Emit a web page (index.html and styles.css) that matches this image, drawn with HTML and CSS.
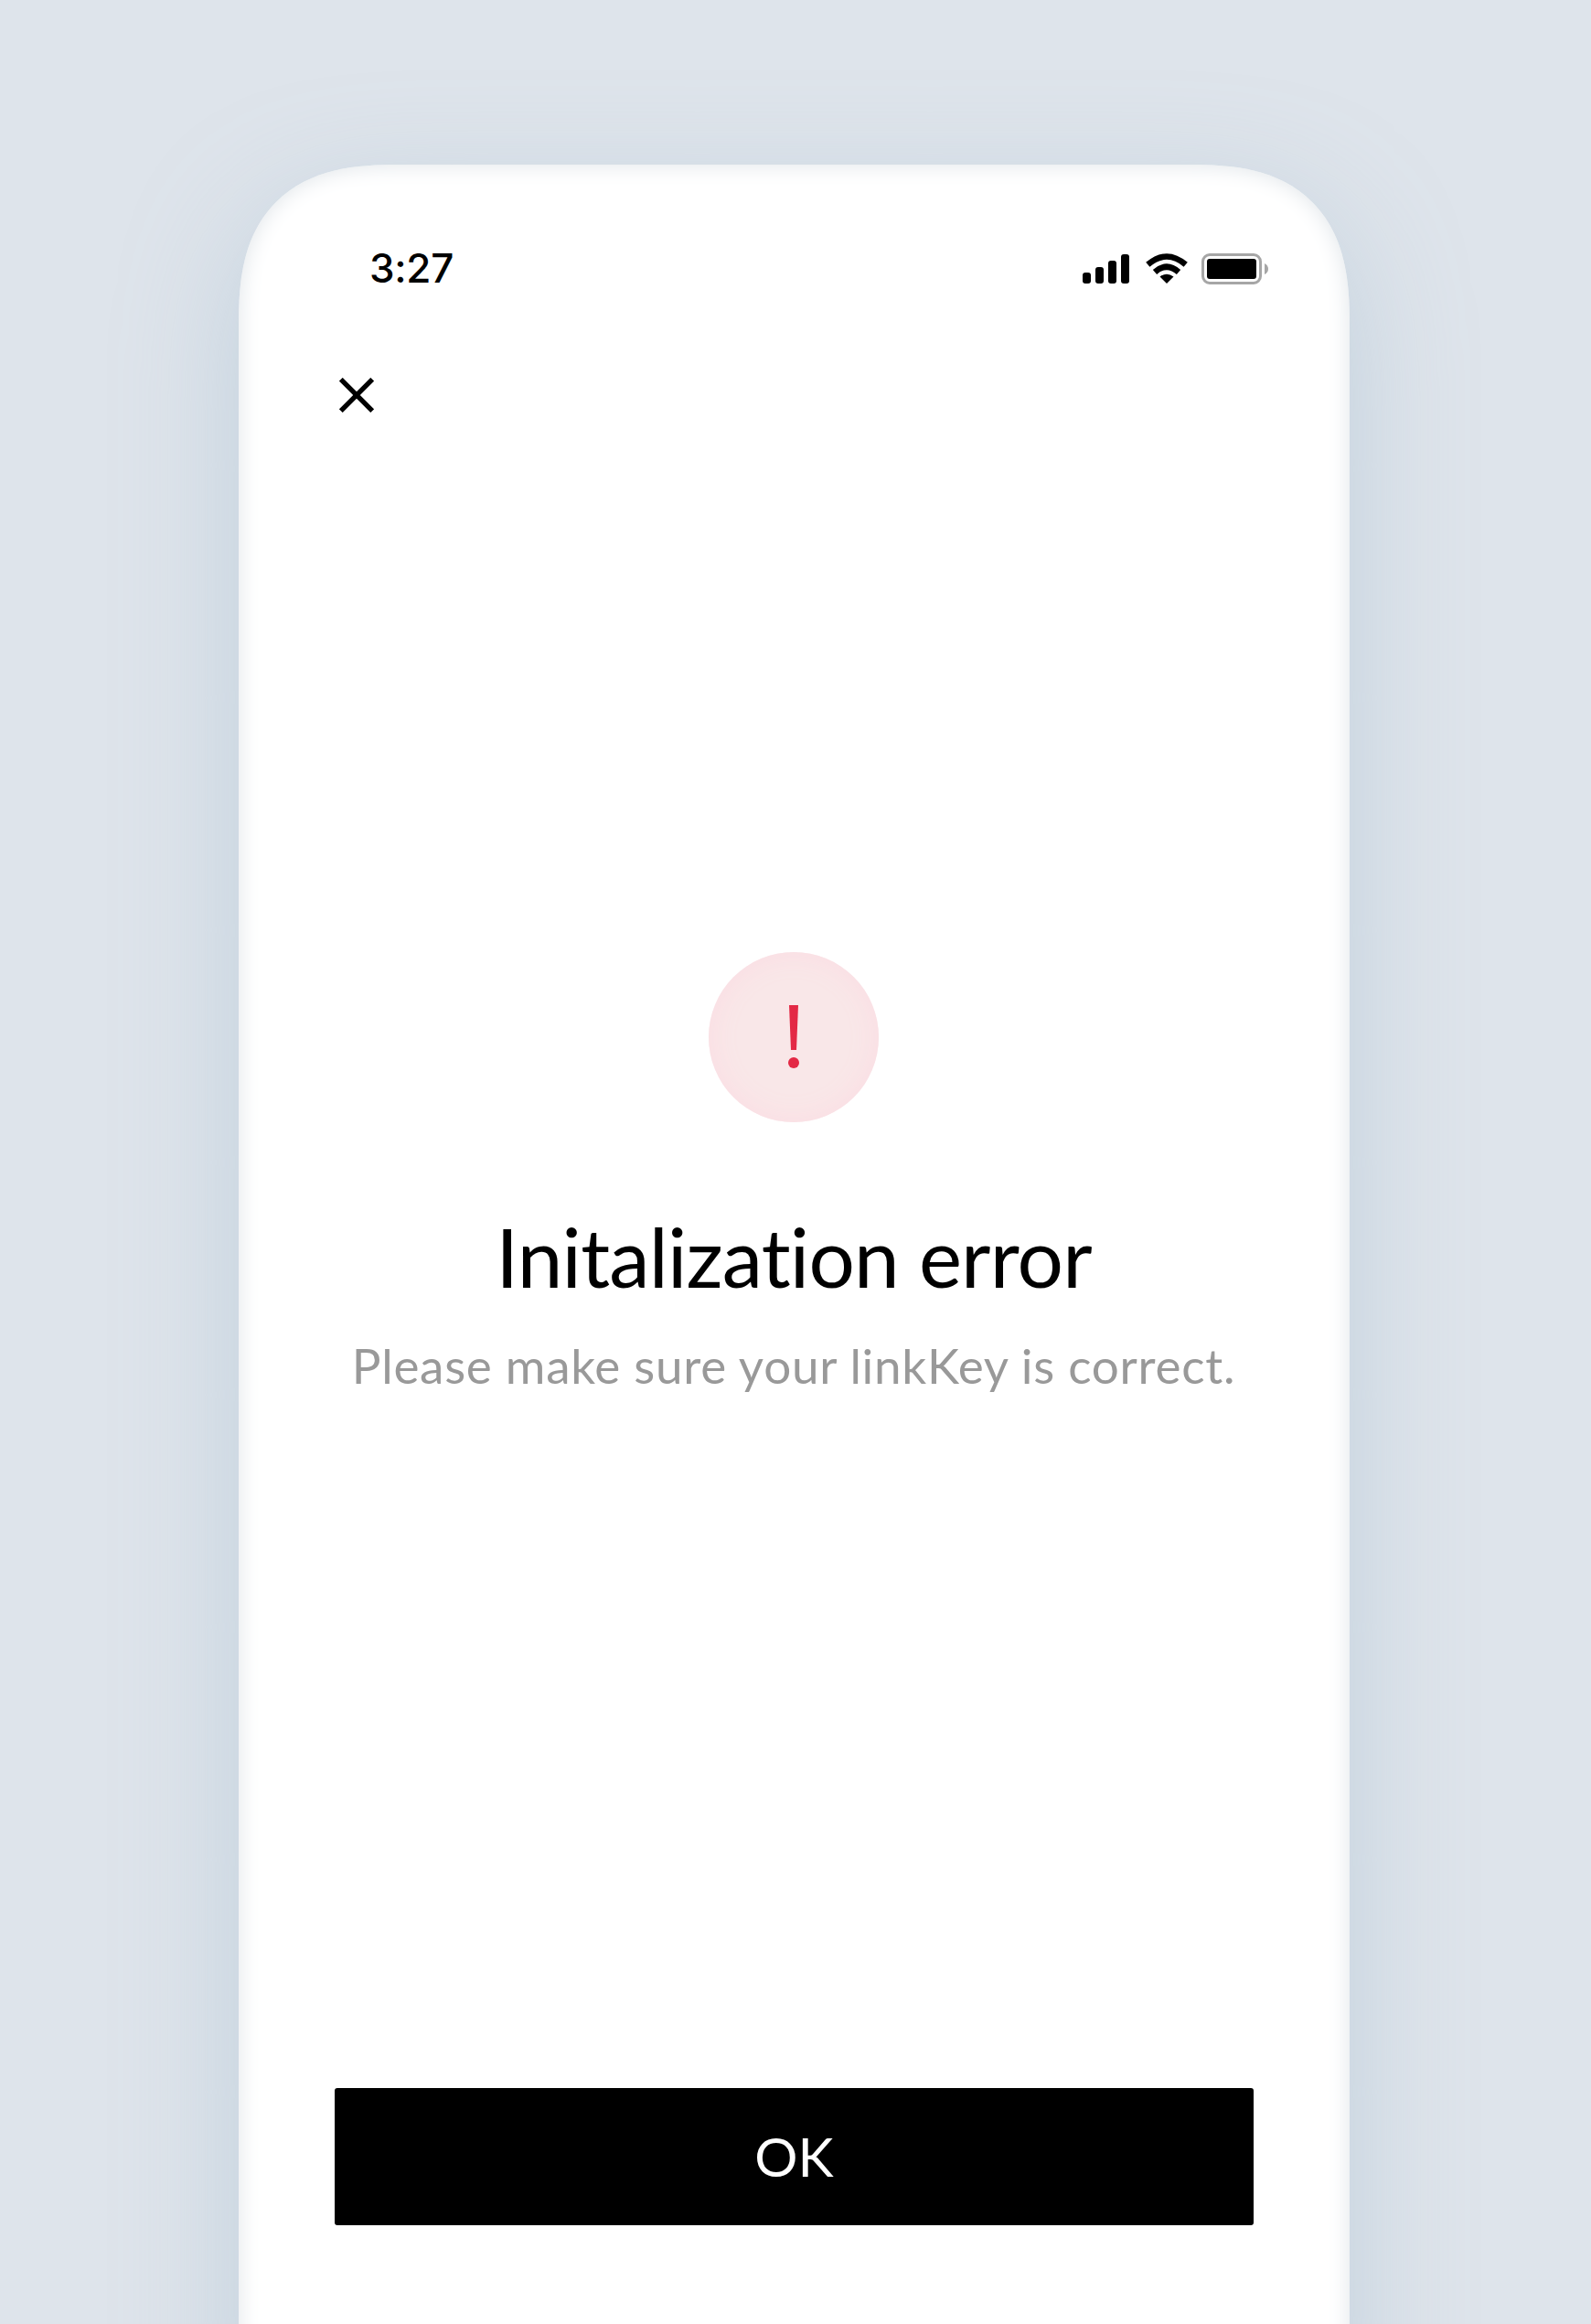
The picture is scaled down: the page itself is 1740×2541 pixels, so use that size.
FILE: index.html
```html
<!DOCTYPE html>
<html lang="en">
<head>
    <meta charset="UTF-8">
    <meta name="viewport" content="width=device-width, initial-scale=1.0">
    <title>Initalization error</title>
    <link rel="stylesheet" href="styles.css">
</head>
<body>
    <div class="phone">
        <div class="status-bar">
            <span class="time">3:27</span>
            <svg class="status-icons" width="204" height="34" viewBox="0 0 204 34">
                <!-- signal -->
                <rect x="0" y="21" width="9" height="12" rx="3"/>
                <rect x="14" y="15" width="9" height="18" rx="3"/>
                <rect x="28" y="8" width="9" height="25" rx="3"/>
                <rect x="42" y="1" width="9" height="32" rx="3"/>
                <!-- wifi -->
                <path d="M92 33 L84.5 25.5 Q92 20 99.5 25.5 Z"/>
                <path d="M79 20.5 Q92 9 105 20.5" fill="none" stroke="#000" stroke-width="6.5"/>
                <path d="M71.3 12.3 Q92 -5.3 112.7 12.3" fill="none" stroke="#000" stroke-width="6.5"/>
                <!-- battery -->
                <rect x="131.5" y="1.5" width="63" height="31" rx="7.5" fill="none" stroke="#a6a6a6" stroke-width="3"/>
                <rect x="136" y="6" width="54" height="22" rx="3"/>
                <path d="M199 11 Q203 13 203 17 Q203 21 199 23 Z" fill="#a6a6a6"/>
            </svg>
        </div>

        <button class="close" aria-label="Close">
            <svg width="38" height="38" viewBox="0 0 38 38">
                <path d="M1.8 1.8 L36.2 36.2 M36.2 1.8 L1.8 36.2" stroke="#000" stroke-width="5.4"/>
            </svg>
        </button>

        <div class="message">
            <div class="error-icon">
                <svg width="12" height="69" viewBox="0 0 12 69">
                    <path d="M1 0 H11 L9 49 H3 Z"/>
                    <circle cx="6" cy="63" r="6"/>
                </svg>
            </div>
            <h1>Initalization error</h1>
            <p>Please make sure your linkKey is correct.</p>
        </div>

        <button class="ok">OK</button>
    </div>
</body>
</html>
```

FILE: styles.css
```css
html {
    overflow: hidden;
}
body {
    display: flow-root;
    margin: 0;
    height: 2541px;
    overflow: hidden;
    background-color: #dee4eb;
    font-family: 'Lato', sans-serif;
    font-variant-ligatures: none;
}
.phone {
    box-sizing: border-box;
    width: 1215px;
    height: 2760px;
    margin: 180px 0 0 261px;
    padding: 97px 88px 0 105px;
    display: flex;
    flex-direction: column;
    border-radius: 142px;
    background-color: #fff;
    box-shadow: 0 40px 120px rgba(165, 190, 208, 0.5), inset 0 0 24px #dfe4e8;
}
@supports (corner-shape: superellipse(1.38)) {
    .phone {
        border-radius: 175px;
        corner-shape: superellipse(1.38);
    }
}
.status-bar {
    display: flex;
    justify-content: space-between;
    height: 34px;
    padding-left: 38px;
}
.time {
    font-family: 'Inter', sans-serif;
    font-size: 44px;
    font-weight: 550;
    line-height: 33px;
    letter-spacing: -0.3px;
}
button {
    padding: 0;
    border: none;
    cursor: pointer;
}
.close {
    display: flex;
    width: 38px;
    height: 38px;
    margin: 102px 0 0 5px;
    background: none;
}
.message {
    display: flex;
    flex-direction: column;
    align-items: center;
    width: 1004px;
    margin-top: 590px;
}
.error-icon {
    box-sizing: border-box;
    display: flex;
    justify-content: center;
    width: 186px;
    height: 186px;
    padding-top: 58px;
    border-radius: 50%;
    background-color: #f9e7e8;
    box-shadow: inset 0 0 32px #fbdce3;
}
.error-icon svg {
    fill: #e32945;
}
h1 {
    margin: 93px 0 0;
    font-size: 89px;
    font-weight: 400;
    line-height: 108px;
    letter-spacing: -0.8px;
    white-space: nowrap;
}
p {
    margin: 33px 0 0;
    color: #999;
    font-size: 53px;
    line-height: 64px;
    letter-spacing: 0.72px;
    white-space: nowrap;
}
.ok {
    width: 1005px;
    height: 150px;
    margin-top: 758px;
    padding-bottom: 2px;
    border-radius: 3px;
    background-color: #000;
    color: #fff;
    font-family: inherit;
    font-size: 59px;
}
```
